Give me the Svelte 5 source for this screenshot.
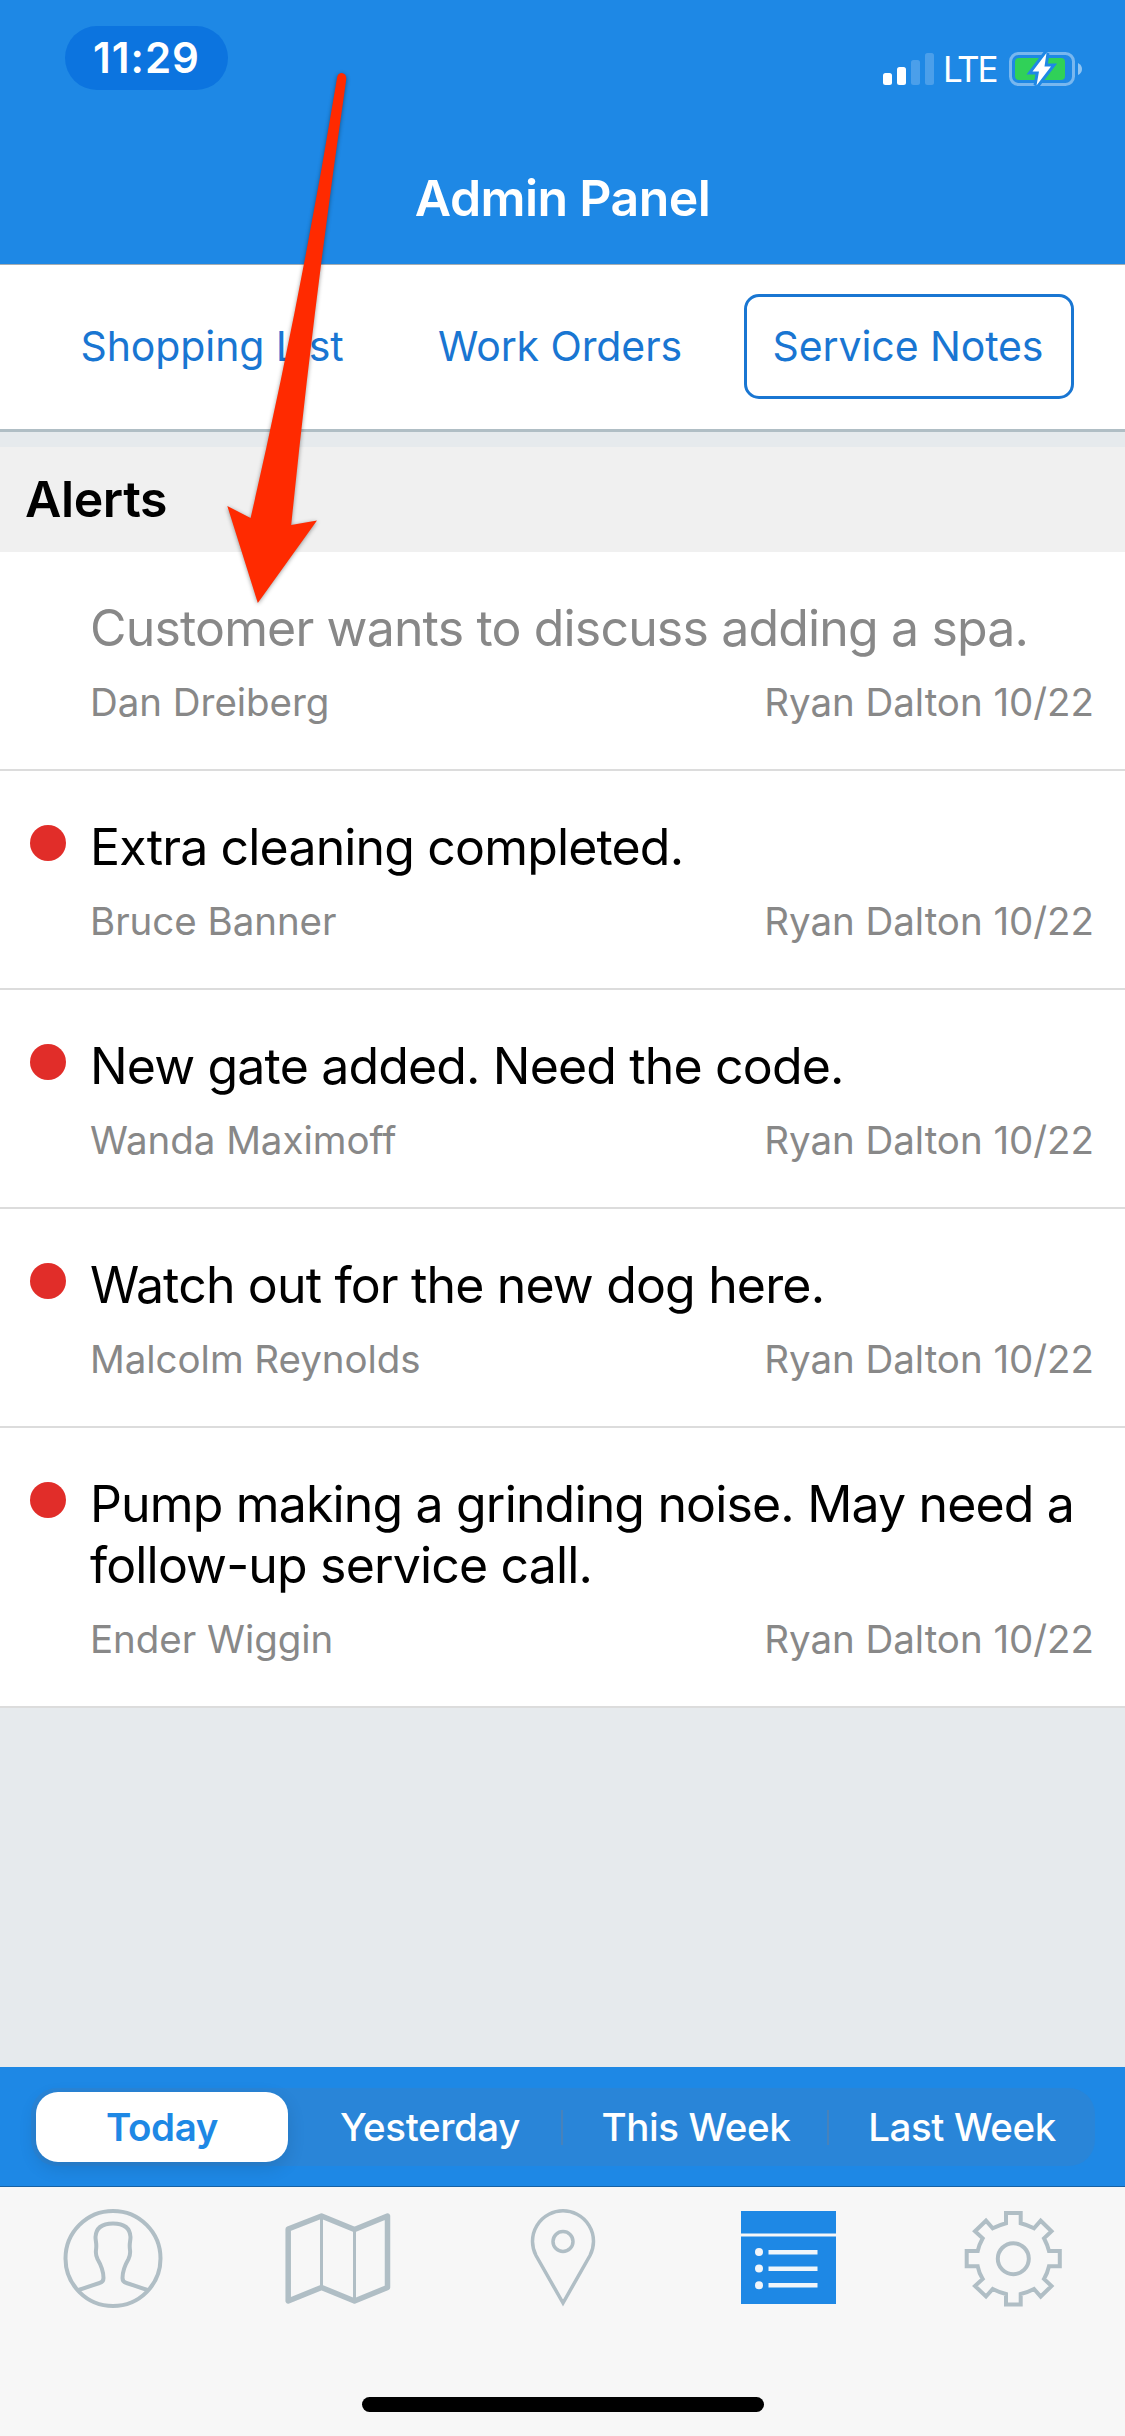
<script>
    const tabs = ['Shopping List', 'Work Orders', 'Service Notes'];
    let activeTab = 'Service Notes';

    const alerts = [
        { text: 'Customer wants to discuss adding a spa.', customer: 'Dan Dreiberg', tech: 'Ryan Dalton', date: '10/22', read: true },
        { text: 'Extra cleaning completed.', customer: 'Bruce Banner', tech: 'Ryan Dalton', date: '10/22', read: false },
        { text: 'New gate added. Need the code.', customer: 'Wanda Maximoff', tech: 'Ryan Dalton', date: '10/22', read: false },
        { text: 'Watch out for the new dog here.', customer: 'Malcolm Reynolds', tech: 'Ryan Dalton', date: '10/22', read: false },
        { text: 'Pump making a grinding noise. May need a follow-up service call.', customer: 'Ender Wiggin', tech: 'Ryan Dalton', date: '10/22', read: false }
    ];

    const ranges = ['Today', 'Yesterday', 'This Week', 'Last Week'];
    let activeRange = 'Today';
</script>

<div class="screen">
    <header class="header">
        <div class="status-bar">
            <span class="clock">11:29</span>
            <div class="status-right">
                <svg class="signal" width="51" height="32" viewBox="0 0 51 32" fill="#fff">
                    <rect x="0" y="20" width="9" height="12" rx="2.5" />
                    <rect x="14" y="14" width="9" height="18" rx="2.5" />
                    <rect x="28" y="7" width="9" height="25" rx="2.5" opacity="0.2" />
                    <rect x="42" y="0" width="9" height="32" rx="2.5" opacity="0.2" />
                </svg>
                <span class="network">LTE</span>
                <svg class="battery" width="74" height="34" viewBox="0 0 74 34">
                    <rect x="1.5" y="1.5" width="63" height="31" rx="8" fill="none" stroke="#fff" stroke-opacity="0.4" stroke-width="3" />
                    <path d="M69 11 Q73 13 73 17 Q73 21 69 23 Z" fill="#fff" fill-opacity="0.5" />
                    <rect x="6" y="6" width="50" height="22" rx="4" fill="#30d158" />
                    <path d="M37.5 1 L23.5 19.5 H30 L27.5 33.5 L42 14.5 H35.5 Z" fill="#fff" stroke="#1e88e5" stroke-width="6" paint-order="stroke" />
                </svg>
            </div>
        </div>
        <h1 class="title">Admin Panel</h1>
    </header>

    <nav class="tabs">
        {#each tabs as tab}
            <button type="button" class="tab" class:active={tab === activeTab} on:click={() => (activeTab = tab)}>{tab}</button>
        {/each}
    </nav>

    <main class="content">
        <h2 class="section-title">Alerts</h2>
        <ul class="alerts">
            {#each alerts as alert}
                <li class="alert" class:read={alert.read}>
                    <span class="dot"></span>
                    <div class="alert-body">
                        <p class="alert-text">{alert.text}</p>
                        <div class="alert-meta">
                            <span>{alert.customer}</span>
                            <span>{alert.tech} {alert.date}</span>
                        </div>
                    </div>
                </li>
            {/each}
        </ul>
    </main>

    <div class="range-bar">
        <div class="segmented">
            {#each ranges as range}
                <button type="button" class="segment" class:active={range === activeRange} on:click={() => (activeRange = range)}>
                    <span class="segment-label">{range}</span>
                </button>
            {/each}
        </div>
    </div>

    <footer class="tab-bar">
        <div class="tab-icons">
            <svg width="100" height="100" viewBox="0 0 100 100" fill="none" stroke="#b0bec5" stroke-width="4">
                <circle cx="50" cy="49.5" r="47.5" />
                <path d="M15.500 81 L36.500 74 Q40.500 73 40.500 69 C40.500 62 38 56 34.500 50 C33 47 32.500 45 33 41 C34 35 32.500 32 32.500 28 C33 19 39 14.500 50 14.500 C61 14.500 67 19 67.500 28 C67.500 32 66 35 67 41 C67.500 45 67 47 65.500 50 C62 56 59.500 62 59.500 69 Q59.500 73 63.500 74 L84.500 81" />
            </svg>
            <svg width="106" height="100" viewBox="0 0 106 100" fill="none" stroke="#b0bec5" stroke-linejoin="round">
                <path d="M3.200 20 L36.500 7 L69.500 20.500 L102.500 7 V78.500 L69.500 92 L36.500 78.500 L3.200 92 Z" stroke-width="5.500" />
                <path d="M36.500 7 V79 M69.500 20.500 V92" stroke-width="3" />
            </svg>
            <svg width="66" height="100" viewBox="0 0 66 100" fill="none" stroke="#b0bec5" stroke-width="3.500">
                <path d="M33 94 L6 46.500 A30.500 30.500 0 1 1 60 46.500 Z" />
                <circle cx="33" cy="32.500" r="10" />
            </svg>
            <svg width="96" height="100" viewBox="0 0 96 100">
                <path d="M1 2 H96 V24.500 H1 Z M1 27.500 H96 V95 H1 Z" fill="#1e88e5" />
                <g fill="#f0f5fa">
                    <circle cx="19" cy="43" r="4" />
                    <circle cx="19" cy="59.500" r="4" />
                    <circle cx="19" cy="76.300" r="4" />
                    <path d="M28.500 41 H77.500 V45.500 H28.500 Z M28.500 57.500 H77.500 V62 H28.500 Z M28.500 74 H77.500 V78.500 H28.500 Z" />
                </g>
            </svg>
            <svg width="98" height="100" viewBox="0 0 98 100" fill="none" stroke="#b0bec5" stroke-width="4">
                <path d="M42 4 H56.700 V14.300 Q63.500 16 70 19.300 L76.700 11.700 L87.500 22.300 L80 29.300 Q83.500 36 85 42 H95.800 V57.300 H85 Q83.500 64 80 70 L87.500 77 L76.700 87.500 L70 80 Q63.500 83.500 56.700 85 V95.500 H42 V85 Q35.500 83.500 28.700 80 L22 87.500 L11 77 L18.700 70 Q15 64 13.700 57.300 H2.700 V42 H13.700 Q15 36 18.700 29.300 L11 22.300 L22 11.700 L28.700 19.300 Q35.500 16 42 14.300 Z" />
                <circle cx="49.300" cy="49.700" r="15.500" />
            </svg>
        </div>
        <div class="home-indicator"></div>
    </footer>

    <svg class="pointer" width="130" height="550" viewBox="220 65 130 550">
        <path d="M337.200 77 Q338 73 342 73 Q346.500 74 346.300 79 Q314 301 291.200 525 L317 520.500 L257.800 603 L227.300 506 L250.600 518 Q301 298 337.200 77 Z" fill="#ff2a00" />
    </svg>
</div>

<style>
    :global(body) {
        margin: 0;
    }

    .screen {
        position: relative;
        display: flex;
        flex-direction: column;
        width: 1125px;
        height: 2436px;
        overflow: hidden;
        background: #e6eaed;
        font-family: Inter, "Liberation Sans", sans-serif;
        color: #000;
    }

    button {
        padding: 0;
        border: none;
        background: none;
        font: inherit;
        color: inherit;
    }

    /* Header */
    .header {
        box-sizing: border-box;
        height: 265px;
        background: #1e88e5;
        border-bottom: 1px solid #a5adb3;
        color: #fff;
    }

    .status-bar {
        display: flex;
        justify-content: space-between;
        align-items: flex-start;
        padding: 26px 42px 0 65px;
    }

    .clock {
        width: 163px;
        height: 64px;
        border-radius: 32px;
        background: #0c74df;
        font-size: 42px;
        font-weight: 600;
        line-height: 64px;
        letter-spacing: 1px;
        text-align: center;
    }

    .status-right {
        display: flex;
        align-items: center;
        padding-top: 26px;
        height: 34px;
    }

    .network {
        width: 53px;
        margin: 0 13px 0 9px;
        font-size: 35px;
        line-height: 34px;
        letter-spacing: -2.3px;
        white-space: nowrap;
    }

    .title {
        margin: 78px 0 0;
        font-size: 50px;
        font-weight: 600;
        line-height: 60px;
        letter-spacing: -0.6px;
        text-align: center;
    }

    /* Top tabs */
    .tabs {
        box-sizing: border-box;
        display: grid;
        grid-template-columns: repeat(3, 330px);
        gap: 18px;
        height: 167px;
        padding: 29px 51px 30px 48px;
        border-bottom: 3px solid #b0bec5;
        background: #fff;
    }

    .tab {
        padding: 0 2px 2px 0;
        border: 3px solid transparent;
        border-radius: 15px;
        font-size: 41px;
        letter-spacing: -0.1px;
        color: #1976d2;
    }

    .tab.active {
        border-color: #1976d2;
    }

    /* Alerts */
    .content {
        flex: 1;
        padding-top: 15px;
    }

    .section-title {
        margin: 0;
        height: 105px;
        padding-left: 25px;
        background: #f0f0f0;
        font-size: 50px;
        font-weight: 600;
        line-height: 105px;
        letter-spacing: -0.4px;
    }

    .alerts {
        margin: 0;
        padding: 0;
        list-style: none;
    }

    .alert {
        display: flex;
        gap: 24px;
        padding: 46px 31px 38px 30px;
        border-bottom: 2px solid #dcdcdc;
        background: #fff;
    }

    .dot {
        flex-shrink: 0;
        width: 36px;
        height: 36px;
        margin-top: 8px;
        border-radius: 50%;
        background: #e12d29;
    }

    .read .dot {
        visibility: hidden;
    }

    .alert-body {
        flex: 1;
    }

    .alert-text {
        margin: 0;
        font-size: 50px;
        line-height: 61px;
        letter-spacing: -0.84px;
    }

    .read .alert-text {
        color: #888;
    }

    .alert-meta {
        display: flex;
        justify-content: space-between;
        margin-top: 14px;
        font-size: 38.5px;
        line-height: 58px;
        letter-spacing: -0.04px;
        color: #888;
    }

    /* Date range */
    .range-bar {
        box-sizing: border-box;
        height: 120px;
        padding: 21px 30px 20px 31px;
        border-bottom: 1px solid #1761a3;
        background: #1e88e5;
    }

    .segmented {
        display: grid;
        grid-template-columns: repeat(4, 1fr);
        height: 78px;
        border-radius: 26px;
        background: #2985d8;
    }

    .segment {
        display: flex;
        align-items: center;
        justify-content: center;
        font-size: 38.5px;
        font-weight: 500;
        letter-spacing: -0.4px;
        color: #fff;
    }

    .segment:not(:first-child):not(:last-child) {
        background: linear-gradient(#4782bb, #4782bb) right center / 2px 35px no-repeat;
    }

    .segment.active {
        justify-content: flex-start;
        padding-left: 5px;
    }

    .segment.active .segment-label {
        width: 252px;
        height: 70px;
        border-radius: 22px;
        background: #fff;
        box-shadow: 0 6px 18px rgba(0, 0, 0, 0.12);
        font-weight: 600;
        line-height: 70px;
        color: #1e88e5;
    }

    /* Bottom bar */
    .tab-bar {
        box-sizing: border-box;
        height: 249px;
        padding-top: 22px;
        background: #f7f7f7;
    }

    .tab-icons {
        display: grid;
        grid-template-columns: repeat(5, 1fr);
        justify-items: center;
    }

    .home-indicator {
        width: 402px;
        height: 15px;
        margin: 88px auto 0;
        border-radius: 8px;
        background: #000;
    }

    .pointer {
        position: absolute;
        left: 220px;
        top: 65px;
        filter: drop-shadow(0 1px 2px rgba(0, 0, 0, 0.4));
    }
</style>
